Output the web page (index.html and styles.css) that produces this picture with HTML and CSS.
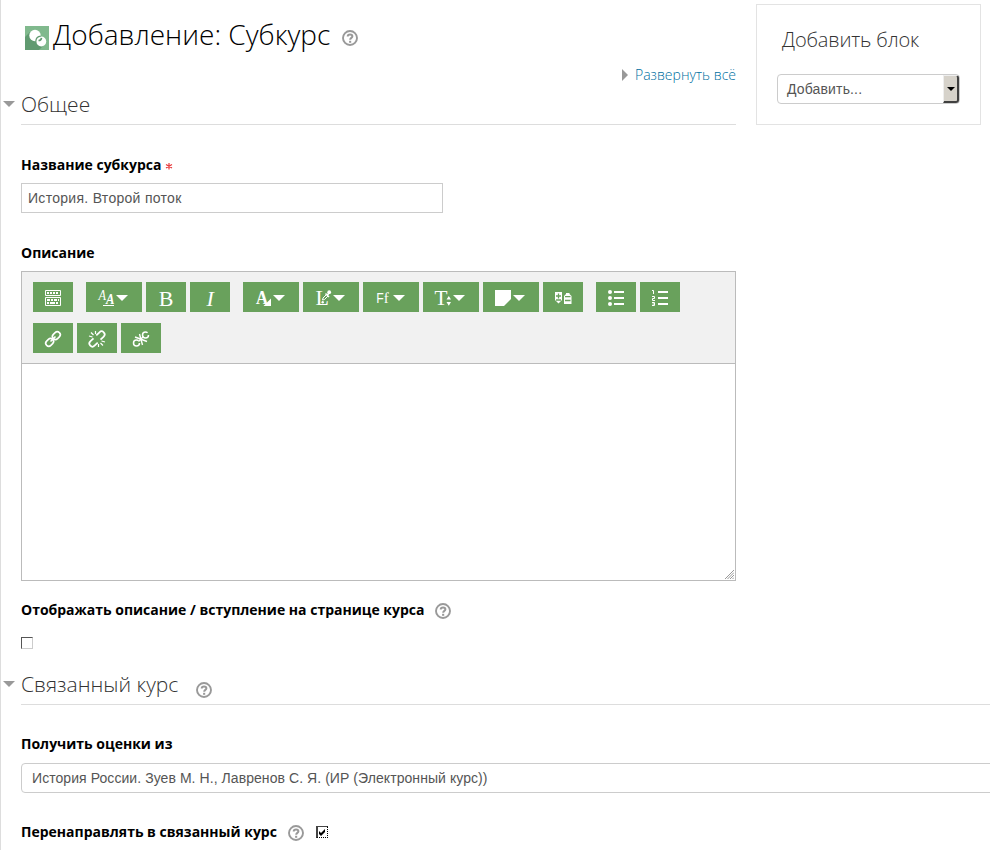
FILE: index.html
```html
<!DOCTYPE html>
<html lang="ru">
<head>
<meta charset="utf-8">
<title>Добавление: Субкурс</title>
<link rel="stylesheet" href="styles.css">
</head>
<body>
<svg class="defs" width="0" height="0" aria-hidden="true">
  <symbol id="help" viewBox="0 0 16 16">
    <circle cx="8" cy="8" r="7" fill="none" stroke="#999" stroke-width="1.9"/>
    <path d="M5.7 6.5C5.7 3.6 10.4 3.8 10.4 6.3C10.4 7.9 8.2 7.8 8.2 9.7" fill="none" stroke="#999" stroke-width="2"/>
    <rect x="7.1" y="10.8" width="2.1" height="2" fill="#999"/>
  </symbol>
  <symbol id="caret" viewBox="0 0 12 6"><path d="M0 0H12L6 6Z" fill="#fff"/></symbol>
</svg>
<div class="page">
  <div class="top">
    <main class="main">
      <h1 class="title">
        <svg class="logo" viewBox="0 0 24 24">
          <rect width="24" height="24" fill="#80b98d"/>
          <path d="M5 6L0 11V24H14L20 18L12 7Z" fill="#609a70"/>
          <circle cx="10" cy="9.500" r="5.700" fill="#fff"/>
          <circle cx="16.300" cy="15.500" r="4.900" fill="#fff"/>
          <path d="M10.800 15.200A5.500 5.500 0 0 1 15.800 10.200" fill="none" stroke="#609a70" stroke-width="1.200"/>
          <path d="M13.500 14.500A3 3 0 0 0 16.500 11.800" fill="none" stroke="#609a70" stroke-width="1.600"/>
        </svg>
        <span class="title-text">Добавление: Субкурс</span>
        <svg class="help"><use href="#help"/></svg>
      </h1>
      <div class="expand"><i class="tri-right"></i><a class="expand-link">Развернуть всё</a></div>
      <h2 class="legend"><i class="tri-down"></i><span class="t-general">Общее</span></h2>
      <div class="label label-first"><span class="t-name">Название субкурса</span><svg class="star" viewBox="0 0 8 8"><path d="M4 1V7.500M1 2.500L7 6M7 2.500L1 6" stroke="#e8393b" stroke-width="1.200"/></svg></div>
      <div class="input"><span class="t-input">История. Второй поток</span></div>
      <div class="label label-desc"><span class="t-desc">Описание</span></div>
      <div class="editor">
        <div class="toolbar">
          <div class="group">
            <div class="btn"><svg viewBox="0 0 40 30" fill="none" stroke="#fff"><path d="M12.500 8.500H27.500V13.500H12.500ZM12.500 15.500H27.500V23.500H12.500Z"/><path d="M14 11H26" stroke-width="2" stroke-dasharray="2 1"/><path d="M14 18H26" stroke-width="2" stroke-dasharray="3 1 2 1"/><path d="M14 21H26" stroke-width="2" stroke-dasharray="2 1 5 1"/></svg></div>
          </div>
          <div class="group">
            <div class="btn wide"><svg viewBox="0 0 56 30"><text x="12.500" y="17.500" class="ser it pair" font-size="14" textLength="7.500" lengthAdjust="spacingAndGlyphs">A</text><text x="20" y="22" class="ser it bold" font-size="15" textLength="8.500" lengthAdjust="spacingAndGlyphs">A</text><path d="M17 23.500H28" stroke="#fff"/><use href="#caret" x="30" y="13" width="12" height="6"/></svg></div>
            <div class="btn"><svg viewBox="0 0 40 30"><text x="12.800" y="23.500" class="ser" font-size="22">B</text></svg></div>
            <div class="btn"><svg viewBox="0 0 40 30"><text x="16.500" y="23.500" class="ser it" font-size="22">I</text></svg></div>
          </div>
          <div class="group">
            <div class="btn wide"><svg viewBox="0 0 56 30"><text x="13" y="22" class="ser bold" font-size="18" textLength="12" lengthAdjust="spacingAndGlyphs">A</text><path d="M28 16.500V24H20.500Z" fill="#fff"/><use href="#caret" x="30" y="13" width="12" height="6"/></svg></div>
            <div class="btn wide"><svg viewBox="0 0 56 30"><text x="12.500" y="23" class="ser" font-size="22">L</text><path d="M19.500 18L20 16L23.500 12.500L25 14L21.500 17.500Z" fill="#69a15c" stroke="#fff"/><path d="M22.500 11.500L26 15M24.500 13L26.500 10.500" stroke="#fff" stroke-width="1.500"/><circle cx="26.200" cy="10.200" r="1.900" fill="#fff"/><circle cx="19.700" cy="20.300" r="1.200" fill="#fff"/><use href="#caret" x="30" y="13" width="12" height="6"/></svg></div>
            <div class="btn wide"><svg viewBox="0 0 56 30"><text x="13.200" y="21" class="sans" font-size="14" textLength="7.500" lengthAdjust="spacingAndGlyphs">F</text><text x="20.800" y="21" class="ser" font-size="15">f</text><use href="#caret" x="30" y="13" width="12" height="6"/></svg></div>
            <div class="btn wide"><svg viewBox="0 0 56 30"><text x="11.500" y="23" class="ser" font-size="22" textLength="13" lengthAdjust="spacingAndGlyphs">T</text><path d="M23.500 17.500L25.800 14L28 17.500ZM23.500 20L25.800 23.800L28 20Z" fill="#fff"/><use href="#caret" x="30" y="13" width="12" height="6"/></svg></div>
            <div class="btn wide"><svg viewBox="0 0 56 30"><path d="M12 8H28V17L21 24H12Z" fill="#fff"/><use href="#caret" x="30" y="13" width="12" height="6"/></svg></div>
            <div class="btn"><svg viewBox="0 0 40 30"><path d="M12 10H19V18L15.500 21.500L12 18Z" fill="#fff"/><path d="M15.500 11.500V16.500M13 14H18M13 18H18" stroke="#69a15c" stroke-width="1.300"/><path d="M23 12V11H26.500V12L28.500 14V22H21V14Z" fill="#fff"/><path d="M22 14.700H27.500M22 18.500H27.500" stroke="#69a15c" stroke-width="1.300"/></svg></div>
          </div>
          <div class="group">
            <div class="btn"><svg viewBox="0 0 40 30" fill="#fff"><circle cx="14" cy="10" r="2"/><circle cx="14" cy="16" r="2"/><circle cx="14" cy="22" r="2"/><path d="M18 9H28V11H18ZM18 15H28V17H18ZM18 21H28V23H18Z"/></svg></div>
            <div class="btn"><svg viewBox="0 0 40 30" fill="#fff"><path d="M18 9H28V11H18ZM18 15H28V17H18ZM18 21H28V23H18Z"/><path d="M12 8.500H13.500V12M12 14.500H14.500V16.500H12.500V18.500H15M12 20.500H14.500V23.500H12M12.500 22H14.500" fill="none" stroke="#fff"/></svg></div>
          </div>
          <div class="group group-links">
            <div class="btn"><svg viewBox="0 0 40 30" fill="none" stroke="#fff" stroke-width="1.600"><g transform="rotate(-45 20 16)"><rect x="11" y="13" width="8.500" height="6" rx="3"/><rect x="20.500" y="13" width="8.500" height="6" rx="3"/><path d="M16.500 16H23.500"/></g></svg></div>
            <div class="btn"><svg viewBox="0 0 40 30" fill="none" stroke="#fff" stroke-width="1.700"><g transform="rotate(-45 20 16)"><path d="M18 13H13.500A3 3 0 0 0 13.500 19H18M22 13H26.500A3 3 0 0 1 26.500 19H22"/></g><path d="M12 13L15.500 14M14 9.500L16.500 12M18.500 8V11M21.500 21V24M23.500 20L26 22.500M24.500 18L28 19" stroke-width="1.200"/></svg></div>
            <div class="btn"><svg viewBox="0 0 40 30" fill="none" stroke="#fff" stroke-width="1.500"><circle cx="24.500" cy="12" r="3" stroke-dasharray="16 3"/><circle cx="15.500" cy="20" r="3" stroke-dasharray="16 3"/><path d="M14 14L26 18.500M18.500 11L21.500 22M17.500 18.500L22.500 13.500" stroke-width="1.400"/></svg></div>
          </div>
        </div>
        <div class="content"><svg class="grip" viewBox="0 0 9 9"><path d="M0 9L9 0M2.500 9L9 2.500M5 9L9 5M7.500 9L9 7.500" stroke="#999" stroke-width="1"/></svg></div>
      </div>
      <div class="label label-show"><span class="t-show">Отображать описание / вступление на странице курса</span><svg class="help"><use href="#help"/></svg></div>
      <div class="check"></div>
    </main>
    <aside class="block">
      <h3 class="block-title"><span class="t-block">Добавить блок</span></h3>
      <div class="select"><span class="t-add">Добавить...</span><span class="arrow"><i></i></span></div>
    </aside>
  </div>
  <section class="linked">
    <h2 class="legend"><i class="tri-down"></i><span class="t-linked">Связанный курс</span><svg class="help help-low"><use href="#help"/></svg></h2>
    <div class="label label-grade"><span class="t-grade">Получить оценки из</span></div>
    <div class="course"><span class="t-course">История России. Зуев М. Н., Лавренов С. Я. (ИР (Электронный курс))</span></div>
    <div class="label label-redirect"><span class="t-redirect">Перенаправлять в связанный курс</span><svg class="help"><use href="#help"/></svg><div class="check checked"><svg viewBox="0 0 12 12"><path d="M3 5L5 7L9 3V6L5 10L3 8Z" fill="#000"/></svg></div></div>
  </section>
</div>
</body>
</html>
```
FILE: styles.css
```css
* { box-sizing: border-box; }
body { margin: 0; background: #fff; color: #000; font-family: "Open Sans", sans-serif; overflow: hidden; }
.defs { display: block; height: 0; }
svg { display: block; }
h1, h2, h3 { margin: 0; font-weight: 300; }
span, a { white-space: nowrap; }

.page { width: 990px; height: 850px; padding-left: 20px; border-left: 1px solid #ddd; overflow: hidden; }
.top { display: flex; gap: 20px; align-items: flex-start; }
.main { width: 715px; height: 665px; }
.help { width: 16px; height: 16px; flex: none; }

.title { display: flex; align-items: center; height: 56px; padding: 19px 0 0 4px; font-size: 28px; line-height: 38px; }
.logo { width: 24px; height: 24px; margin-right: 4px; }
.title-text { width: 277px; margin: -7px 12px 0 0; }
.expand { display: flex; align-items: center; justify-content: flex-end; height: 20px; margin-top: 9px; font-size: 14px; line-height: 20px; }
.expand-link { width: 101px; color: #00709f; font-weight: 300; }
.tri-right { border: 6px solid transparent; border-left-color: #999; border-right: 0; margin-right: 7px; }

.legend { display: flex; align-items: center; height: 40px; border-bottom: 1px solid #ddd; color: #333; font-size: 21px; line-height: 38px; }
.legend span { margin-top: -1px; }
.tri-down { flex: none; border: 6px solid transparent; border-top-color: #999; border-bottom: 0; margin: -2px 6px 0 -18px; }

.label { display: flex; align-items: center; height: 20px; font-size: 14px; font-weight: 700; line-height: 20px; }
.label-first { margin-top: 30px; }
.star { width: 8px; height: 8px; margin: 1px 0 0 4px; }
.label-desc { margin-top: 30px; }
.input, .course, .select { font-family: "Liberation Sans", Arial, sans-serif; font-size: 14px; color: #555; }
.input { width: 422px; height: 30px; margin-top: 8px; padding-left: 6px; border: 1px solid #ccc; line-height: 28px; letter-spacing: .29px; }

.editor { width: 715px; height: 310px; margin-top: 8px; border: 1px solid #bbb; }
.toolbar { display: flex; flex-wrap: wrap; gap: 11px 13px; height: 92px; padding: 10px 11px; align-content: flex-start; background: #f1f1f1; border-bottom: 1px solid #bbb; }
.group { display: flex; gap: 4px; }
.btn { width: 40px; height: 30px; background: #69a15c; }
.btn.wide { width: 56px; }
.btn svg { width: 100%; height: 100%; }
.btn text { fill: #fff; stroke: none; }
.ser { font-family: "Liberation Serif", serif; }
.sans { font-family: "Liberation Sans", sans-serif; }
.it { font-style: italic; }
.bold { font-weight: 700; }
.content { display: flex; height: 216px; justify-content: flex-end; align-items: flex-end; }
.grip { width: 9px; height: 9px; margin-right: 1px; margin-bottom: 1px; }

.label-show { margin-top: 19px; }
.label .help { margin: 1px 0 0 11px; }
.label-show .help { margin-left: 10px; }
.check { width: 12px; height: 12px; margin-top: 17px; border: 1px solid; border-color: #555 #ccc #ccc #555; }
.check.checked { margin: 0 0 0 12px; border: 1px dotted #000; border-top: 1px solid #444; border-left: 2px solid #444; }
.check.checked svg { width: 12px; height: 12px; margin: -1px 0 0 -2px; }

.block { width: 225px; height: 121px; margin-top: 4px; border: 1px solid #e3e3e3; padding: 20px 20px 0; }
.block-title { height: 30px; padding-left: 5px; color: #333; font-size: 20px; line-height: 30px; letter-spacing: -.15px; }
.select { display: flex; justify-content: space-between; width: 183px; height: 30px; margin-top: 19px; padding-left: 9px; border: 1px solid #ccc; border-radius: 4px; line-height: 28px; letter-spacing: .15px; }
.arrow { display: flex; align-items: center; justify-content: center; width: 16px; height: 28px; background: #d6d2ca; border: 1px solid #eee; border-right: 2px solid #404040; border-bottom: 2px solid #404040; border-radius: 0 3px 3px 0; }
.arrow i { border: 4px solid transparent; border-top-color: #000; border-bottom: 0; }

.help-low { margin: 10px 0 0 18px; }
.label-grade { margin-top: 29px; }
.course { width: 1000px; height: 30px; margin-top: 9px; padding-left: 10px; border: 1px solid #ccc; border-radius: 4px; line-height: 28px; letter-spacing: .065px; }
.label-redirect { margin-top: 29px; }
```
